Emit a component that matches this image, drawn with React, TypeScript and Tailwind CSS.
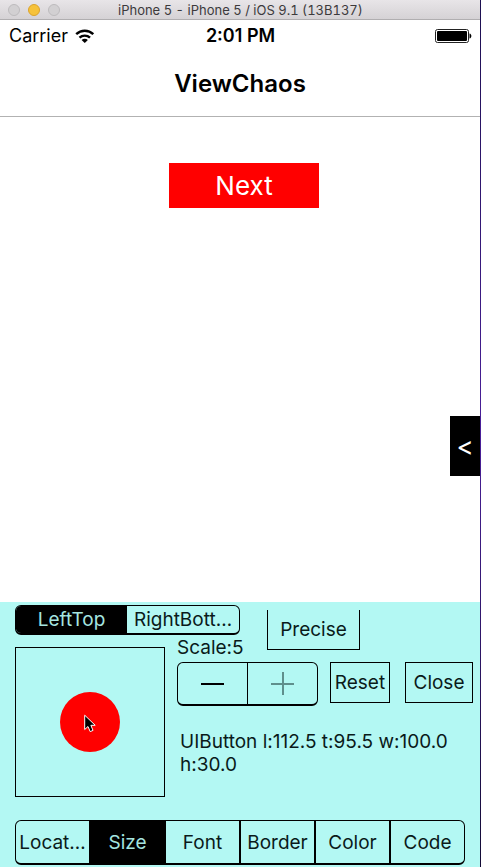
import { useState } from 'react';

const modes = ['LeftTop', 'RightBott…'];
const tabs = ['Locat…', 'Size', 'Font', 'Border', 'Color', 'Code'];

function TitleBar() {
  return (
    <header className="flex h-5 items-center border-b border-[#b0aeb0] bg-linear-to-b from-[#e8e5e8] to-[#d5d2d5] px-2">
      <div className="flex gap-2">
        <span className="size-3 rounded-full border border-[#bdbbbd] bg-[#d2d0d2]" />
        <span className="size-3 rounded-full border border-[#dba32c] bg-[#f6c23a]" />
        <span className="size-3 rounded-full border border-[#bdbbbd] bg-[#d2d0d2]" />
      </div>
      <h1 className="ml-[58px] whitespace-nowrap text-[13px] leading-4 text-[#3c3a3c] tabular-nums">
        iPhone 5 - iPhone 5 / iOS 9.1 (13B137)
      </h1>
    </header>
  );
}

function StatusBar() {
  return (
    <div className="grid h-8 grid-cols-[1fr_auto_1fr] items-center pl-[9px] pr-2 text-[18px] leading-6 text-black">
      <div className="flex items-center gap-[7px]">
        <span>Carrier</span>
        <svg width="20" height="15" viewBox="0 0 20 15" fill="none" stroke="#000" strokeWidth="2.4" aria-label="Wi-Fi">
          <path d="M1.200 5.200C6 .6 13.500 .6 18.300 5.200" />
          <path d="M4.500 8.700C7.400 5.900 12.100 5.900 15 8.700" />
          <path d="M9.750 14L6.600 10.900C8.400 9.300 11.100 9.300 12.900 10.900Z" fill="#000" stroke="none" />
        </svg>
      </div>
      <span className="font-semibold">2:01 PM</span>
      <svg className="justify-self-end" width="38" height="16" viewBox="0 0 38 16" aria-label="Battery full">
        <rect x="1.500" y="1.500" width="33" height="13" rx="2" fill="#fff" stroke="#222" />
        <rect x="3" y="3" width="30" height="10" rx="1" fill="#000" />
        <path d="M35.500 5.500C38 6 38 10 35.500 10.500Z" fill="#000" />
      </svg>
    </div>
  );
}

function Inspector() {
  const [mode, setMode] = useState(0);
  const [tab, setTab] = useState(1);
  return (
    <section className="bg-[#b3f8f3] pb-[2px] text-[19px] leading-6 text-[#0a1a1a]">
      <div className="grid grid-cols-[162px_78px_1fr] grid-rows-[35px_25px_auto] pl-[15px] pr-[7px]">
        <div className="col-span-2 mt-[3px] flex h-[30px] w-[225px] overflow-hidden rounded-md border border-b-2 border-black">
          {modes.map((m, i) => (
            <button
              key={m}
              aria-pressed={mode === i}
              onClick={() => setMode(i)}
              className={`whitespace-nowrap pt-px ${i === 0 ? 'w-[111px]' : 'flex-1'} ${
                mode === i ? 'bg-black text-[#a5e5e0]' : ''
              }`}
            >
              {m}
            </button>
          ))}
        </div>
        <button className="row-span-2 ml-3 mt-2 h-10 w-[93px] border border-t-0 border-black pt-px">Precise</button>
        <div className="row-span-2 mt-[10px] flex size-[150px] items-center justify-center border border-black">
          <div className="relative size-[60px] rounded-full bg-[#ff0000]">
            <svg className="absolute left-6 top-[22px]" width="12" height="19" viewBox="0 0 12 19">
              <path
                d="M.7 1.200V15.500L4 12.500L6.200 17.600L9 16.400L6.900 11.300H11.200Z"
                fill="#000"
                stroke="#fff"
              />
            </svg>
          </div>
        </div>
        <p className="whitespace-nowrap leading-[22px]">Scale:5</p>
        <div className="col-span-2 col-start-2 row-start-3">
          <div className="flex">
            <div className="flex h-11 w-[141px] rounded-md border border-b-2 border-black">
              <button aria-label="Decrease scale" className="flex flex-1 items-center justify-center">
                <svg width="24" height="24" viewBox="0 0 24 24" stroke="#000" strokeWidth="2">
                  <path d="M0 12H23" />
                </svg>
              </button>
              <button
                aria-label="Increase scale"
                className="flex flex-1 items-center justify-center border-l border-black"
              >
                <svg width="24" height="24" viewBox="0 0 24 24" stroke="#5f8f8c" strokeWidth="2">
                  <path d="M0 12H23M12 0V23" />
                </svg>
              </button>
            </div>
            <button className="ml-3 h-[41px] w-[60px] border border-black">Reset</button>
            <button className="ml-auto h-[41px] w-[68px] border border-black">Close</button>
          </div>
          <p className="ml-[3px] mt-6 leading-[23px]">UIButton l:112.5 t:95.5 w:100.0 h:30.0</p>
        </div>
      </div>
      <nav className="mx-[15px] mt-[23px] flex h-[45px] overflow-hidden rounded-md border border-b-2 border-black">
        {tabs.map((t, i) => (
          <button
            key={t}
            aria-pressed={tab === i}
            onClick={() => setTab(i)}
            className={`min-w-0 flex-1 whitespace-nowrap pt-px ${
              i < tabs.length - 1 ? 'border-r-2 border-black' : ''
            } ${tab === i ? 'bg-black text-[#a5e5e0]' : ''}`}
          >
            {t}
          </button>
        ))}
      </nav>
    </section>
  );
}

export default function App() {
  return (
    <div className="flex min-h-screen bg-white font-['Inter',sans-serif]">
      <div className="flex min-w-0 flex-1 flex-col">
        <TitleBar />
        <StatusBar />
        <div className="flex h-[65px] items-center justify-center border-b border-[#b2b2b2]">
          <h2 className="text-[24px] font-semibold leading-8 text-black">ViewChaos</h2>
        </div>
        <main className="flex flex-1 flex-col">
          <button className="ml-2 mt-[46px] h-[45px] w-[150px] self-center bg-[#ff0000] pt-px text-[26px] leading-8 text-white">
            Next
          </button>
          <button
            aria-label="Open panel"
            className="mt-[208px] h-[60px] w-[30px] self-end bg-black pt-px text-[26px] leading-8 text-white"
          >
            &lt;
          </button>
        </main>
        <Inspector />
      </div>
      <div className="w-px bg-linear-to-b from-[#1c0f50] via-[#4a1f9a] to-[#120a35]" />
    </div>
  );
}
